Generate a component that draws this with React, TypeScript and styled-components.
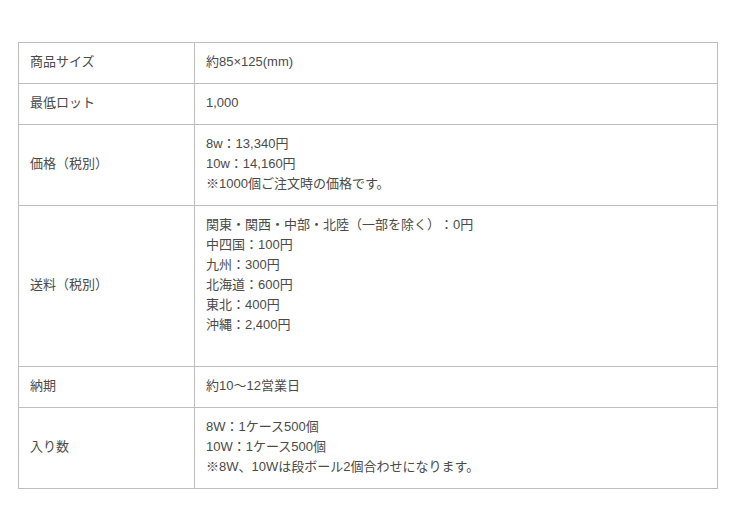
import React from "react";
import styled, { createGlobalStyle } from "styled-components";

const Global = createGlobalStyle`
  html, body { margin: 0; padding: 0; background: #fff; }
  body {
    font-family: "Liberation Sans", "Noto Sans CJK JP", sans-serif;
    color: #4a4a4a;
  }
`;

const Page = styled.div`
  padding: 42px 22px 40px 18px;
`;

const Table = styled.table`
  width: 700px;
  border-collapse: collapse;
  table-layout: fixed;
  font-size: 13px;
  line-height: 20px;
  text-spacing-trim: space-all;
  text-autospace: no-autospace;
`;

const Head = styled.th`
  width: 153px;
  text-align: left;
  font-weight: normal;
  vertical-align: middle;
  padding: 9px 11px 11px;
  border: 1px solid #bdbdbd;
`;

const Cell = styled.td`
  vertical-align: middle;
  padding: 9px 11px 11px;
  border: 1px solid #bdbdbd;
`;

const Line = styled.div`
  min-height: 20px;
  white-space: nowrap;
`;

const rows: { label: string; lines: string[] }[] = [
  { label: "商品サイズ", lines: ["約85×125(mm)"] },
  { label: "最低ロット", lines: ["1,000"] },
  {
    label: "価格（税別）",
    lines: ["8w：13,340円", "10w：14,160円", "※1000個ご注文時の価格です。"],
  },
  {
    label: "送料（税別）",
    lines: [
      "関東・関西・中部・北陸（一部を除く）：0円",
      "中四国：100円",
      "九州：300円",
      "北海道：600円",
      "東北：400円",
      "沖縄：2,400円",
      "",
    ],
  },
  { label: "納期", lines: ["約10〜12営業日"] },
  {
    label: "入り数",
    lines: ["8W：1ケース500個", "10W：1ケース500個", "※8W、10Wは段ボール2個合わせになります。"],
  },
];

export default function App() {
  return (
    <>
      <Global />
      <Page lang="ja">
        <Table>
          <tbody>
            {rows.map((r) => (
              <tr key={r.label}>
                <Head>{r.label}</Head>
                <Cell>
                  {r.lines.map((l, i) => (
                    <Line key={i}>{l}</Line>
                  ))}
                </Cell>
              </tr>
            ))}
          </tbody>
        </Table>
      </Page>
    </>
  );
}
